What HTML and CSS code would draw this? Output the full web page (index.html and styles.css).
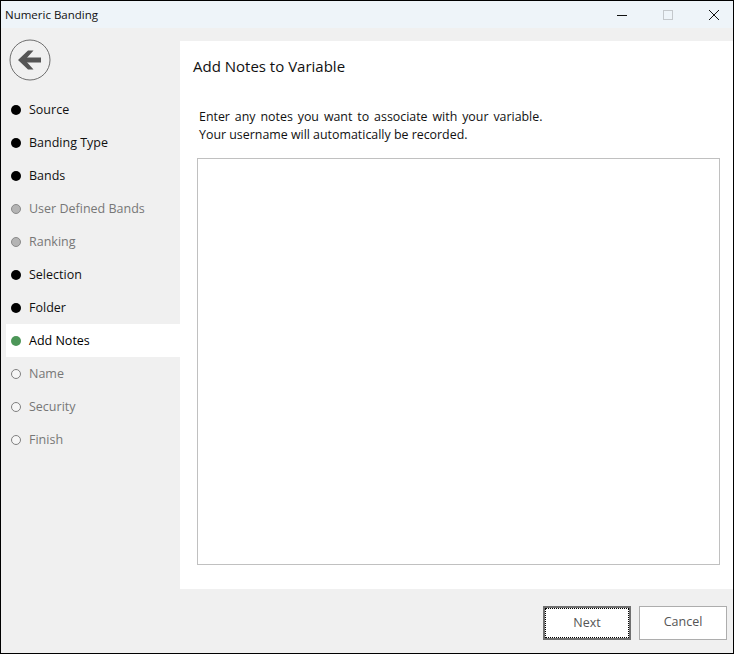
FILE: index.html
```html
<!DOCTYPE html>
<html lang="en">
<head>
<meta charset="UTF-8">
<title>Numeric Banding</title>
<link rel="stylesheet" href="styles.css">
</head>
<body>
<div class="window">
 <header class="titlebar">
  <span class="title">Numeric Banding</span>
  <div class="win-controls">
   <svg class="win-btn" width="12" height="12" viewBox="0 0 12 12"><path d="M1 6.5h10" stroke="#111" fill="none"/></svg>
   <svg class="win-btn" width="12" height="12" viewBox="0 0 12 12"><rect x="1.5" y="1.5" width="9" height="9" stroke="#c4c8cc" fill="none"/></svg>
   <svg class="win-btn" width="12" height="12" viewBox="0 0 12 12"><path d="M1 1l10 10M11 1L1 11" stroke="#111" fill="none"/></svg>
  </div>
 </header>
 <div class="body">
  <aside class="sidebar">
   <div class="back">
    <svg width="42" height="42" viewBox="0 0 42 42">
     <circle cx="21" cy="21" r="20" fill="#f0f0f0" stroke="#6e6e6e" stroke-width="1"/>
     <path d="M32 21H13" fill="none" stroke="#555" stroke-width="5"/>
     <path d="M19 11.500L9 21l10 9.500h5.500L16 21l8.500-9.500z" fill="#555"/>
    </svg>
   </div>
   <ul class="steps">
    <li class="step done">Source</li>
    <li class="step done">Banding Type</li>
    <li class="step done">Bands</li>
    <li class="step skipped">User Defined Bands</li>
    <li class="step skipped">Ranking</li>
    <li class="step done">Selection</li>
    <li class="step done">Folder</li>
    <li class="step current">Add Notes</li>
    <li class="step todo">Name</li>
    <li class="step todo">Security</li>
    <li class="step todo">Finish</li>
   </ul>
  </aside>
  <main class="panel">
   <h1 class="panel-title">Add Notes to Variable</h1>
   <p class="intro"><span class="spaced">Enter any notes you want to associate with your variable.</span><br>Your username will automatically be recorded.</p>
   <textarea class="notes"></textarea>
  </main>
 </div>
 <footer class="footer">
  <button class="btn btn-default"><span class="focus">Next</span></button>
  <button class="btn"><span class="nofocus">Cancel</span></button>
 </footer>
</div>
</body>
</html>
```
FILE: styles.css
```css
html,body{margin:0;padding:0}
body{font-family:"Open Sans","Noto Sans",sans-serif;font-size:12.500px;color:#111;background:#f0f0f0}
.window{width:734px;height:654px;box-sizing:border-box;border:1px solid #000;display:flex;flex-direction:column;background:#f0f0f0}
.titlebar{height:27px;flex:none;background:#eef4f9;display:flex;justify-content:space-between;align-items:center;padding-left:4px}
.title{font-size:11.500px;color:#111}
.win-controls{display:flex;gap:34px;padding-right:13px}
.win-btn{display:block}
.body{flex:1;display:flex;min-height:0;padding-top:13px}
.sidebar{width:179px;flex:none}
.back{padding:0 0 0 8px;height:54px;margin-top:-2px}
.back svg{display:block}
.steps{list-style:none;margin:0;padding:0 0 0 5px}
.step{height:33px;line-height:33px;padding-left:23px;position:relative}
.step::before{content:"";position:absolute;left:4.500px;top:11.500px;width:10px;height:10px;border-radius:50%;box-sizing:border-box}
.done::before{background:#000}
.skipped{color:#777}
.skipped::before{background:#b4b4b4;border:1px solid #8a8a8a}
.current{background:#fff;color:#000}
.current::before{background:#4c9658}
.todo{color:#777}
.todo::before{background:#f6f6f6;border:1.500px solid #808080}
.panel{flex:1;background:#fff;display:flex;flex-direction:column;padding:0 13px 24px 13px;min-width:0}
.panel-title{font-size:15px;font-weight:400;margin:15px 0 0;line-height:21px;color:#111}
.intro{margin:31px 0 0 6px;line-height:18px;font-size:12.400px}
.spaced{word-spacing:1.700px}
.notes{flex:1;display:block;margin:14px 0 0 4px;border:1px solid #c0c0c0;outline:none;resize:none;padding:0;background:#fff}
.footer{height:64px;flex:none;display:flex;justify-content:flex-end;align-items:flex-start;gap:8px;padding:17px 6px 0 0;box-sizing:border-box}
.btn{width:88px;height:34px;box-sizing:border-box;border:1px solid #adadad;background:#fff;color:#555;font:inherit;padding:1px;display:block}
.btn span{display:block;height:100%;line-height:28px;box-sizing:border-box}
.btn-default{border:2px solid #707070;padding:0}
.focus{border:1px dotted #000}
```
